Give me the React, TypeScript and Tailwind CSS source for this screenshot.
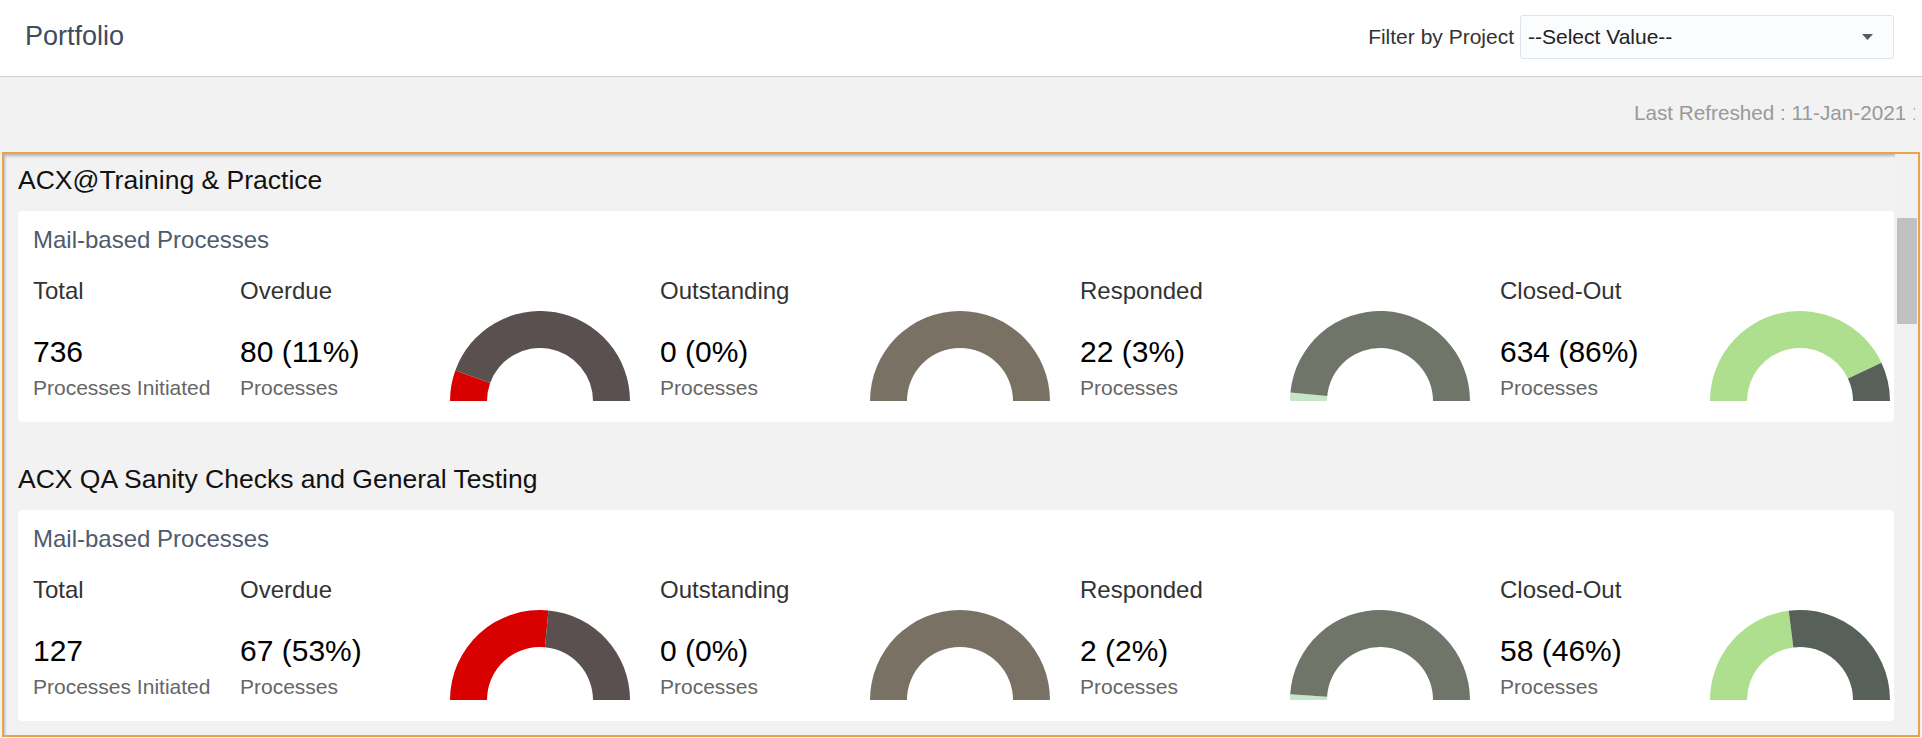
import React from "react";

type Stat = { label: string; value: string; pct: number; fill: string; rest: string };

type Section = { title: string; total: string; stats: Stat[] };

const sections: Section[] = [
  {
    title: "ACX@Training & Practice",
    total: "736",
    stats: [
      { label: "Overdue", value: "80 (11%)", pct: 11, fill: "#d90000", rest: "#5b5050" },
      { label: "Outstanding", value: "0 (0%)", pct: 0, fill: "#d90000", rest: "#797264" },
      { label: "Responded", value: "22 (3%)", pct: 3, fill: "#c6e6c8", rest: "#6f7569" },
      { label: "Closed-Out", value: "634 (86%)", pct: 86, fill: "#addf8e", rest: "#57615a" },
    ],
  },
  {
    title: "ACX QA Sanity Checks and General Testing",
    total: "127",
    stats: [
      { label: "Overdue", value: "67 (53%)", pct: 53, fill: "#d90000", rest: "#5b5050" },
      { label: "Outstanding", value: "0 (0%)", pct: 0, fill: "#d90000", rest: "#797264" },
      { label: "Responded", value: "2 (2%)", pct: 2, fill: "#c6e6c8", rest: "#6f7569" },
      { label: "Closed-Out", value: "58 (46%)", pct: 46, fill: "#addf8e", rest: "#57615a" },
    ],
  },
];

// half donut slice, t0..t1 as fraction from left end over the top
function arc(t0: number, t1: number) {
  const R = 90;
  const r = 53;
  const c = 90;
  const pt = (t: number, rad: number) => {
    const a = Math.PI * (1 - t);
    return `${(c + rad * Math.cos(a)).toFixed(2)} ${(c - rad * Math.sin(a)).toFixed(2)}`;
  };
  return `M ${pt(t0, R)} A ${R} ${R} 0 0 1 ${pt(t1, R)} L ${pt(t1, r)} A ${r} ${r} 0 0 0 ${pt(t0, r)} Z`;
}

function HalfGauge({ pct, fill, rest }: { pct: number; fill: string; rest: string }) {
  const t = pct / 100;
  return (
    <svg width="180" height="90" viewBox="0 0 180 90">
      {t > 0 && <path d={arc(0, t)} fill={fill} />}
      <path d={arc(t, 1)} fill={rest} />
    </svg>
  );
}

function StatText({ label, value, sub }: { label: string; value: string; sub: string }) {
  return (
    <div className="flex flex-col whitespace-nowrap">
      <div className="text-[24px] leading-[28px] text-[#333]">{label}</div>
      <div className="mt-[30px] text-[30px] leading-[34px] text-black">{value}</div>
      <div className="mt-[7px] text-[21px] leading-[24px] text-[#666]">{sub}</div>
    </div>
  );
}

function ProjectSection({ section, first }: { section: Section; first: boolean }) {
  return (
    <section className={first ? "" : "mt-[42px]"}>
      <h2 className="text-[26.5px] leading-[30px] text-[#111]">{section.title}</h2>
      <div className="mt-[16px] rounded-[4px] bg-white pb-[21px] pl-[15px] pt-[15px]">
        <div className="text-[24px] leading-[28px] text-[#4e5b6e]">Mail-based Processes</div>
        <div className="mt-[23px] grid grid-cols-[207px_210px_210px_210px_210px_210px_210px_210px_180px]">
          <StatText label="Total" value={section.total} sub="Processes Initiated" />
          {section.stats.map((s) => (
            <React.Fragment key={s.label}>
              <StatText label={s.label} value={s.value} sub="Processes" />
              <div className="pt-[34px]">
                <HalfGauge pct={s.pct} fill={s.fill} rest={s.rest} />
              </div>
            </React.Fragment>
          ))}
        </div>
      </div>
    </section>
  );
}

export default function App() {
  return (
    <div className="flex h-[738px] w-full flex-col overflow-hidden bg-[#f2f2f2] font-['Liberation_Sans',Arial,sans-serif]">
      <header className="flex h-[77px] shrink-0 items-start justify-between border-b border-[#d0d0d0] bg-white pl-[25px] pr-[28px]">
        <h1 className="pt-[21px] text-[27px] leading-[30px] text-[#3e4c5e]">Portfolio</h1>
        <div className="mt-[15px] flex items-center gap-[6px]">
          <span className="text-[21px] leading-[24px] text-[#333]">Filter by Project</span>
          <div className="flex h-[44px] w-[374px] items-center justify-between rounded-[3px] border border-[#dfe3e8] bg-[#fbfcfd] pl-[7px] pr-[20px]">
            <span className="text-[21px] leading-[24px] text-[#222]">--Select Value--</span>
            <svg width="11" height="6" viewBox="0 0 11 6">
              <path d="M0 0 H11 L5.5 6 Z" fill="#555b66" />
            </svg>
          </div>
        </div>
      </header>

      <div className="flex shrink-0 justify-end pr-[7px] pt-[24px]">
        <div className="w-[281px] overflow-hidden whitespace-nowrap text-[20.7px] leading-[24px] text-[#999]">
          Last Refreshed : 11-Jan-2021 11:42 AM
        </div>
      </div>

      <div className="mb-[1px] ml-[2px] mr-[2px] mt-[27px] flex min-h-0 flex-1 border-2 border-[#e8a44c] shadow-[inset_1px_2px_3px_rgba(0,0,0,0.25)]">
        <div className="min-w-0 flex-1 overflow-hidden pl-[14px] pr-[1px] pt-[11px]">
          {sections.map((s, i) => (
            <ProjectSection key={s.title} section={s} first={i === 0} />
          ))}
        </div>
        <div className="w-[23px] shrink-0 bg-[#f1f1f1] pl-[2px] pr-[1px] pt-[64px]">
          <div className="h-[106px] bg-[#c1c1c1]" />
        </div>
      </div>
    </div>
  );
}
